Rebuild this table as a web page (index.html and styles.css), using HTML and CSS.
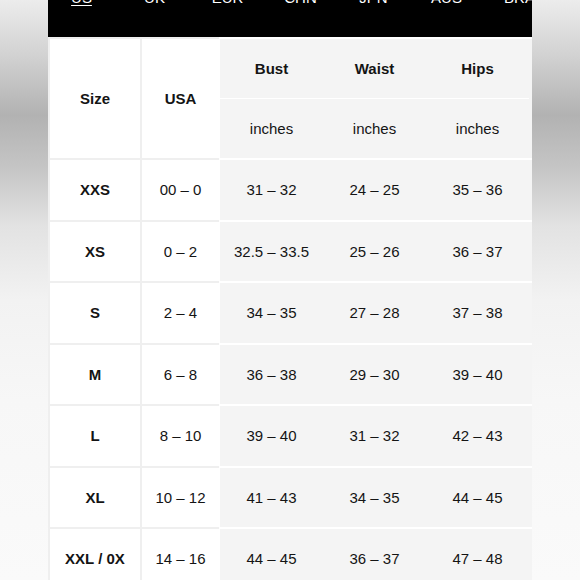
FILE: index.html
```html
<!DOCTYPE html>
<html lang="en">
<head>
<meta charset="utf-8">
<title>Size chart</title>
<link rel="stylesheet" href="styles.css">
</head>
<body>
<div class="page">
  <nav class="tabs">
    <ul class="tab-list">
      <li class="tab active">US</li>
      <li class="tab">UK</li>
      <li class="tab">EUR</li>
      <li class="tab">CHN</li>
      <li class="tab">JPN</li>
      <li class="tab">AUS</li>
      <li class="tab">BRA</li>
    </ul>
  </nav>
  <div class="chart">
    <div class="row head">
      <div class="cell size bold">Size</div>
      <div class="cell usa bold">USA</div>
      <div class="measures head-measures">
        <div class="sub sub-top">
          <div class="m bold">Bust</div>
          <div class="m bold">Waist</div>
          <div class="m bold">Hips</div>
        </div>
        <div class="sub">
          <div class="m">inches</div>
          <div class="m">inches</div>
          <div class="m">inches</div>
        </div>
      </div>
    </div>
    <div class="row">
      <div class="cell size bold">XXS</div>
      <div class="cell usa">00 – 0</div>
      <div class="measures"><div class="m">31 – 32</div><div class="m">24 – 25</div><div class="m">35 – 36</div></div>
    </div>
    <div class="row">
      <div class="cell size bold">XS</div>
      <div class="cell usa">0 – 2</div>
      <div class="measures"><div class="m">32.5 – 33.5</div><div class="m">25 – 26</div><div class="m">36 – 37</div></div>
    </div>
    <div class="row">
      <div class="cell size bold">S</div>
      <div class="cell usa">2 – 4</div>
      <div class="measures"><div class="m">34 – 35</div><div class="m">27 – 28</div><div class="m">37 – 38</div></div>
    </div>
    <div class="row">
      <div class="cell size bold">M</div>
      <div class="cell usa">6 – 8</div>
      <div class="measures"><div class="m">36 – 38</div><div class="m">29 – 30</div><div class="m">39 – 40</div></div>
    </div>
    <div class="row">
      <div class="cell size bold">L</div>
      <div class="cell usa">8 – 10</div>
      <div class="measures"><div class="m">39 – 40</div><div class="m">31 – 32</div><div class="m">42 – 43</div></div>
    </div>
    <div class="row">
      <div class="cell size bold">XL</div>
      <div class="cell usa">10 – 12</div>
      <div class="measures"><div class="m">41 – 43</div><div class="m">34 – 35</div><div class="m">44 – 45</div></div>
    </div>
    <div class="row">
      <div class="cell size bold">XXL / 0X</div>
      <div class="cell usa">14 – 16</div>
      <div class="measures"><div class="m">44 – 45</div><div class="m">36 – 37</div><div class="m">47 – 48</div></div>
    </div>
  </div>
</div>
</body>
</html>
```

FILE: styles.css
```css
html, body {
  margin: 0;
  padding: 0;
  height: 100%;
}

body {
  overflow: hidden;
  font-family: "Liberation Sans", Arial, sans-serif;
  font-size: 15px;
  color: #141414;
  background: linear-gradient(180deg,
    #ececec 0px,
    #d2d2d2 55px,
    #b2b2b2 115px,
    #c4c4c4 165px,
    #e2e2e2 225px,
    #f2f2f2 300px,
    #f7f7f7 400px,
    #fafafa 580px);
}

.page {
  width: 484px;
  margin: 0 auto;
  height: 580px;
  overflow: hidden;
  background: #efefef;
}

.tabs {
  background: #000;
  height: 37px;
  overflow: hidden;
}

.tab-list {
  list-style: none;
  margin: -11px 0 0 -3px;
  padding: 0;
  display: flex;
}

.tab {
  flex: 0 0 73px;
  text-align: center;
  color: #fff;
  line-height: 17px;
  white-space: nowrap;
}

.tab.active {
  text-decoration: underline;
  text-underline-offset: 2px;
}

.chart {
  padding: 2px 0 0 2px;
  display: flex;
  flex-direction: column;
  gap: 2px;
  background: linear-gradient(90deg, #efefef 171px, #ffffff 171px);
}

.row {
  display: flex;
  height: 59.5px;
}

.row.head {
  height: 119px;
}

.cell {
  background: #fff;
  display: flex;
  align-items: center;
  justify-content: center;
}

.size {
  width: 90px;
}

.usa {
  width: 77px;
  margin-left: 2px;
}

.measures {
  flex: 1;
  margin-left: 1px;
  padding-right: 3px;
  background: #f4f4f4;
  display: grid;
  grid-template-columns: repeat(3, 1fr);
}

.head-measures {
  display: flex;
  flex-direction: column;
}

.sub {
  flex: 1;
  display: grid;
  grid-template-columns: repeat(3, 1fr);
}

.sub-top {
  border-bottom: 1px solid #fff;
}

.m {
  display: flex;
  align-items: center;
  justify-content: center;
  white-space: nowrap;
}

.bold {
  font-weight: bold;
}
```
